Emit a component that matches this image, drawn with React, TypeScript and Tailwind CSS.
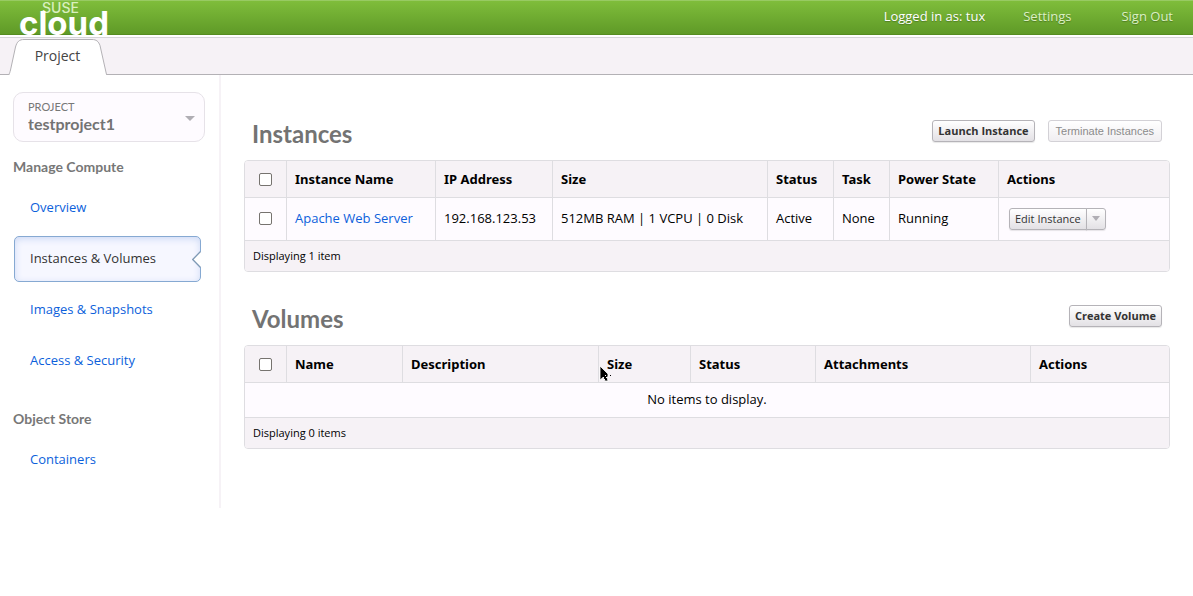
import React from "react";

const navCompute = ["Overview", "Instances & Volumes", "Images & Snapshots", "Access & Security"];
const active = "Instances & Volumes";

function NavLink({ label }: { label: string }) {
  if (label === active) {
    return (
      <a
        href="#"
        aria-current="page"
        className="relative mr-1 ml-px flex h-[46px] items-center rounded-[5px] border border-[#86a9d2] bg-[#f6f7ff] pb-[2px] pl-[15px] text-[#333] shadow-[inset_0_2px_7px_#cdd9f5]"
      >
        {label}
        <svg className="absolute top-[14px] -right-px" width="9" height="17" viewBox="0 0 9 17" aria-hidden="true">
          <path d="M9 0.5 L1 8.5 L9 16.5 Z" fill="#fff" />
          <path d="M8.5 0.5 L0.7 8.5 L8.5 16.5" fill="none" stroke="#7f9ab5" strokeWidth="1.3" />
        </svg>
      </a>
    );
  }
  return (
    <a href="#" className="flex h-[46px] items-center pb-[2px] pl-[17px] text-[#0c5fdb]">
      {label}
    </a>
  );
}

function NavGroup({ title, items }: { title: string; items: string[] }) {
  return (
    <section>
      <h3 className="mb-2 font-[Lato] text-sm leading-5 font-bold text-[#777]">{title}</h3>
      <ul className="flex flex-col gap-[5px]">
        {items.map((item) => (
          <li key={item}>
            <NavLink label={item} />
          </li>
        ))}
      </ul>
    </section>
  );
}

function Caret({ className, width = 8 }: { className?: string; width?: number }) {
  return (
    <svg className={className} width={width} height="5" viewBox="0 0 10 5" preserveAspectRatio="none" aria-hidden="true">
      <path d="M0 0H10L5 5Z" fill="#b0aeb4" />
    </svg>
  );
}

function Pointer() {
  return (
    <svg className="absolute top-5 left-0" width="14" height="17" viewBox="0 0 14 17" aria-hidden="true">
      <path d="M1 0V14L4 11.500L6 15H9L8 11H9V8Z" fill="#000" stroke="#fff" strokeWidth="0.8" />
      <path d="M4 12H5V11H4ZM5 14H6V13H5ZM7 12H8V11H7ZM6 10H7V9H6Z" fill="#fff" />
      <path d="M11 9H12V10H11Z" fill="#000" />
    </svg>
  );
}

const cell = "border-l border-[#dedde1] px-2 text-left first:border-l-0";
const button =
  "h-[22px] rounded-[3px] border border-[#b5b3b8] bg-linear-to-b from-white to-[#e3e1e5] px-[5px] text-[11px] shadow-[0_1px_1px_#00000018]";

function Check({ label }: { label: string }) {
  return (
    <input
      type="checkbox"
      aria-label={label}
      className="mx-auto block size-[13px] appearance-none rounded-[2px] border border-[#76736f] bg-white checked:bg-[#0c5fdb]"
    />
  );
}

interface Column {
  name: string;
  width: string;
}

const instanceColumns: Column[] = [
  { name: "Instance Name", width: "w-[149px]" },
  { name: "IP Address", width: "w-[117px]" },
  { name: "Size", width: "w-[215px]" },
  { name: "Status", width: "w-[66px]" },
  { name: "Task", width: "w-[56px]" },
  { name: "Power State", width: "w-[109px]" },
  { name: "Actions", width: "" },
];

const volumeColumns: Column[] = [
  { name: "Name", width: "w-[116px]" },
  { name: "Description", width: "w-[196px]" },
  { name: "Size", width: "w-[92px]" },
  { name: "Status", width: "w-[125px]" },
  { name: "Attachments", width: "w-[215px]" },
  { name: "Actions", width: "" },
];

interface DataTableProps {
  title: string;
  columns: Column[];
  actions: React.ReactNode;
  summary: string;
  pointerAt?: string;
  children: React.ReactNode;
}

function DataTable({ title, columns, actions, summary, pointerAt, children }: DataTableProps) {
  return (
    <section>
      <div className="mb-3 flex items-start justify-between px-2">
        <h2 className="font-[Lato] text-2xl leading-7 font-bold text-[#737373]">{title}</h2>
        <div className="flex gap-[13px]">{actions}</div>
      </div>
      <div className="overflow-hidden rounded-[4px] border border-[#dedde1]">
        <table aria-label={title} className="w-full table-fixed border-separate border-spacing-0 text-black">
          <thead>
            <tr className="h-9 bg-[#f6f2f6]">
              <th className={`${cell} w-[41px]`}>
                <Check label={`Select all ${title}`} />
              </th>
              {columns.map((c) => (
                <th
                  key={c.name}
                  scope="col"
                  className={`${cell} ${c.width} relative font-['Noto_Sans',sans-serif] font-bold whitespace-nowrap`}
                >
                  {c.name}
                  {pointerAt === c.name && <Pointer />}
                </th>
              ))}
            </tr>
          </thead>
          <tbody>{children}</tbody>
          <tfoot>
            <tr className="h-[31px] bg-[#f6f2f6]">
              <td colSpan={columns.length + 1} className="border-t border-[#dedde1] px-2 text-[11px]">
                {summary}
              </td>
            </tr>
          </tfoot>
        </table>
      </div>
    </section>
  );
}

export default function App() {
  return (
    <div className="min-h-screen bg-white font-['Open_Sans',sans-serif] text-[13px] leading-[18px]">
      <header className="flex h-[35px] items-start justify-between border-t border-b border-t-[#98ca63] border-b-[#558c20] bg-linear-to-b from-[#7fbd3b] to-[#5f9a27] pr-5 pl-5">
        <svg className="overflow-visible" width="90" height="34" viewBox="0 0 90 34" role="img" aria-label="SUSE cloud">
          <text x="22" y="12" fontFamily="Inter, sans-serif" fontSize="14" fontWeight="500" fill="#d9efbf">
            SUSE
          </text>
          <text x="-1" y="34" fontFamily="Inter, sans-serif" fontSize="33" fontWeight="700" fill="#fff">
            cloud
          </text>
        </svg>
        <nav className="flex h-[30px] items-center text-[#dcf0c4] [text-shadow:0_1px_1px_#00000040]">
          <span className="mr-[38px] text-white">Logged in as: tux</span>
          <a href="#" className="mr-[50px]">
            Settings
          </a>
          <a href="#">Sign Out</a>
        </nav>
      </header>

      <div className="mt-[2px] flex h-[38px] items-end border-t border-b border-t-[#d6d5d8] border-b-[#b3b1b5] bg-[#f6f2f6] pl-2">
        <a href="#" className="relative -mb-px flex h-9 w-[99px] items-center justify-center pb-[2px] text-sm text-[#444]">
          <svg className="absolute inset-0" width="99" height="36" viewBox="0 0 99 36" aria-hidden="true">
            <path
              d="M0 35.5 H0.5 C1.5 35 2 33 2.5 31 L7.5 8 C9 2.500 11.500 0.500 16 0.500 H84 C88.500 0.500 90.500 2.500 92 6.500 L98.500 35.5"
              fill="#fff"
              stroke="#b3b1b5"
            />
            <path d="M2 35h96v1H2Z" fill="#fff" />
          </svg>
          <span className="relative">Project</span>
        </a>
      </div>

      <div className="flex items-start">
        <aside className="w-[221px] shrink-0 border-r-2 border-[#f6f2f6] pt-[17px] pr-[14px] pb-[25px] pl-[13px]">
          <div className="relative mb-[15px] h-[50px] rounded-[10px] border border-[#e6e2e8] bg-[#fefbff] px-[14px] pt-2">
            <label htmlFor="project" className="block font-[Lato] text-[11px] leading-3 text-[#777]">
              PROJECT
            </label>
            <select
              id="project"
              className="mt-px block h-5 w-full appearance-none bg-transparent font-[Lato] text-base leading-5 font-bold text-[#737373]"
            >
              <option>testproject1</option>
            </select>
            <Caret className="pointer-events-none absolute top-[23px] right-[9px]" width={10} />
          </div>
          <nav className="flex flex-col gap-[25px]">
            <NavGroup title="Manage Compute" items={navCompute} />
            <NavGroup title="Object Store" items={["Containers"]} />
          </nav>
        </aside>

        <main className="flex min-w-0 grow flex-col gap-[33px] pt-[45px] pr-[23px] pl-[23px]">
          <DataTable
            title="Instances"
            columns={instanceColumns}
            summary="Displaying 1 item"
            actions={
              <>
                <button className={`${button} font-bold text-[#333]`}>Launch Instance</button>
                <button
                  disabled
                  className="h-[22px] rounded-[3px] border border-[#d3d1d6] bg-linear-to-b from-white to-[#f0eef1] px-[7px] font-['Liberation_Sans',sans-serif] text-[11px] text-[#8b8b8b]"
                >
                  Terminate Instances
                </button>
              </>
            }
          >
            <tr className="h-[43px] bg-[#fefbff] *:border-t *:pb-[2px]">
              <td className={cell}>
                <Check label="Select Apache Web Server" />
              </td>
              <td className={cell}>
                <a href="#" className="text-[#0c5fdb]">
                  Apache Web Server
                </a>
              </td>
              <td className={cell}>192.168.123.53</td>
              <td className={cell}>512MB RAM | 1 VCPU | 0 Disk</td>
              <td className={cell}>Active</td>
              <td className={cell}>None</td>
              <td className={cell}>Running</td>
              <td className={cell}>
                <div className="ml-[2px] flex pt-px">
                  <button className={`${button} rounded-r-none text-[#333]`}>Edit Instance</button>
                  <button aria-label="More actions" className={`${button} -ml-px rounded-l-none`}>
                    <Caret />
                  </button>
                </div>
              </td>
            </tr>
          </DataTable>

          <DataTable
            title="Volumes"
            columns={volumeColumns}
            summary="Displaying 0 items"
            pointerAt="Size"
            actions={<button className={`${button} font-bold text-[#333]`}>Create Volume</button>}
          >
            <tr className="h-[35px] bg-[#fefbff]">
              <td colSpan={7} className="border-t border-[#dedde1] pb-[2px] text-center">
                No items to display.
              </td>
            </tr>
          </DataTable>
        </main>
      </div>
    </div>
  );
}
